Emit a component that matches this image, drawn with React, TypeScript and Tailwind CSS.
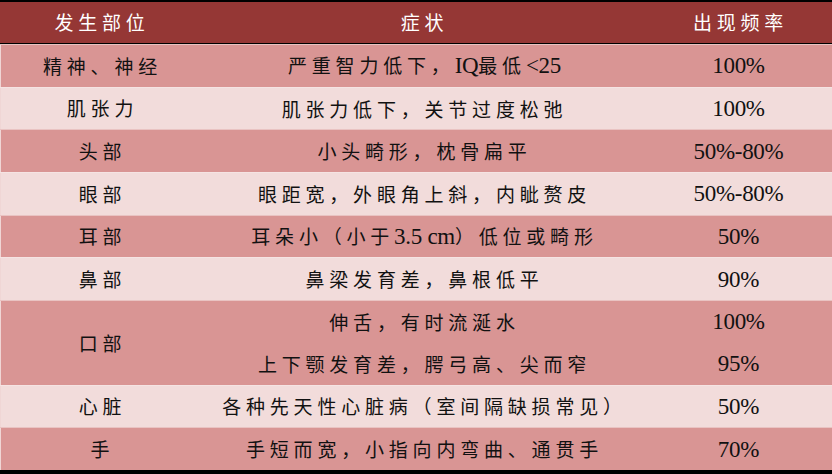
import React from 'react';

type Row = {
  part: string;
  items: { symptom: string; rate: string }[];
};

const rows: Row[] = [
  { part: '精神、神经', items: [{ symptom: '严重智力低下，IQ最低<25', rate: '100%' }] },
  { part: '肌张力', items: [{ symptom: '肌张力低下，关节过度松弛', rate: '100%' }] },
  { part: '头部', items: [{ symptom: '小头畸形，枕骨扁平', rate: '50%-80%' }] },
  { part: '眼部', items: [{ symptom: '眼距宽，外眼角上斜，内眦赘皮', rate: '50%-80%' }] },
  { part: '耳部', items: [{ symptom: '耳朵小（小于3.5 cm）低位或畸形', rate: '50%' }] },
  { part: '鼻部', items: [{ symptom: '鼻梁发育差，鼻根低平', rate: '90%' }] },
  {
    part: '口部',
    items: [
      { symptom: '伸舌，有时流涎水', rate: '100%' },
      { symptom: '上下颚发育差，腭弓高、尖而窄', rate: '95%' },
    ],
  },
  { part: '心脏', items: [{ symptom: '各种先天性心脏病（室间隔缺损常见）', rate: '50%' }] },
  { part: '手', items: [{ symptom: '手短而宽，小指向内弯曲、通贯手', rate: '70%' }] },
];

// CJK runs get the wide spacing of the slide font, latin runs stay tight in Times
const Mixed = ({ text }: { text: string }) => {
  const parts = text.match(/[\x00-\x7F]+|[^\x00-\x7F]+/g) || [];
  return (
    <span className="whitespace-nowrap">
      {parts.map((p, i) =>
        /^[\x00-\x7F]+$/.test(p) ? (
          <span key={i} className="font-['Liberation_Serif',serif] text-[23px] tracking-[-0.3px]">
            {p}
          </span>
        ) : (
          <span key={i} className="font-['Noto_Sans_CJK_SC',sans-serif] text-[19px] tracking-[4.8px]">
            {p}
          </span>
        )
      )}
    </span>
  );
};

export default function App() {
  return (
    <div className="w-[832px] h-[474px] bg-black pt-[1.5px] pb-[3px] text-[#111]">
      <div className="grid grid-cols-[200px_445px_187px] h-[41.5px] bg-[#953735] text-white items-center text-center">
        <div className="pl-[4px]"><Mixed text="发生部位" /></div>
        <div className="pl-[4px]"><Mixed text="症状" /></div>
        <div className="pl-[4px]"><Mixed text="出现频率" /></div>
      </div>
      <div className="h-[1px] bg-black" />
      <div className="flex flex-col">
        {rows.map((r, idx) => {
          const dark = idx % 2 === 0;
          return (
            <div
              key={r.part}
              className={`grid grid-cols-[200px_445px_187px] border-t border-[#e9c3c2] ${
                dark ? 'bg-[#d99594]' : 'bg-[#f2dcdb] border-[#f5e4e3]'
              }`}
            >
              <div className="flex items-center justify-center pl-[4px] border-l border-[#f0d6d5]">
                <Mixed text={r.part} />
              </div>
              <div className="col-span-2 flex flex-col">
                {r.items.map((it) => (
                  <div key={it.symptom} className="grid grid-cols-[445px_187px] h-[41.7px] items-center text-center">
                    <div className="pl-[4px] leading-none"><Mixed text={it.symptom} /></div>
                    <div className="leading-none"><Mixed text={it.rate} /></div>
                  </div>
                ))}
              </div>
            </div>
          );
        })}
      </div>
    </div>
  );
}
